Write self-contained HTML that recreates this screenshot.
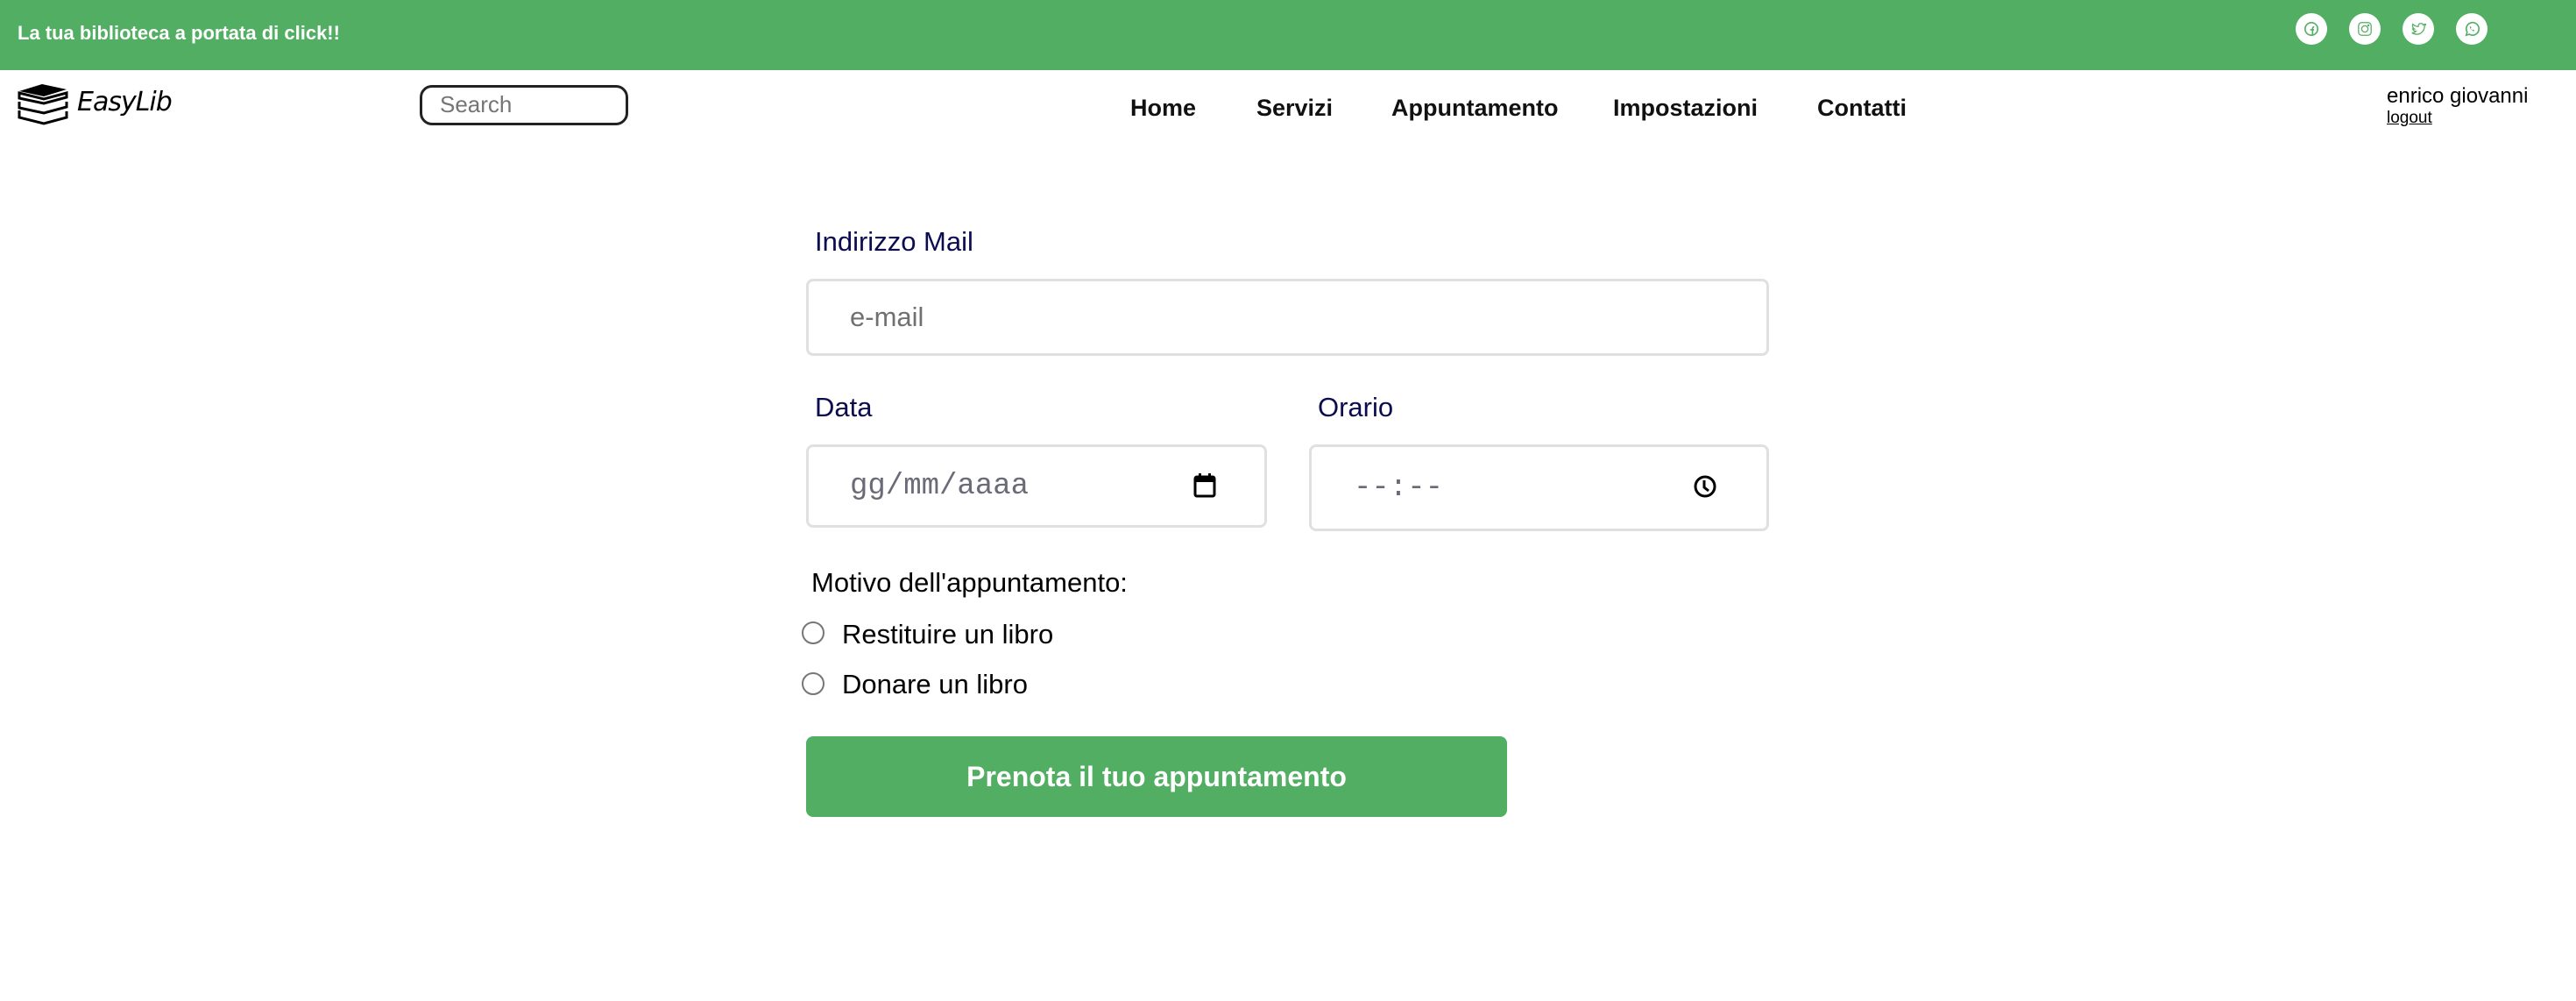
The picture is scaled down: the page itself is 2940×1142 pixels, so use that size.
<!DOCTYPE html>
<html><head><meta charset="utf-8"><style>
*{margin:0;padding:0;box-sizing:border-box}
body{width:2940px;height:1142px;background:#fff;font-family:"Liberation Sans",Arial,sans-serif;position:relative;overflow:hidden}
.abs{position:absolute}
.top{left:0;top:0;width:2940px;height:80px;background:#52ae62}
.tt{left:20px;top:25px;color:#fff;font-weight:bold;font-size:22px}
.soc{width:36px;height:36px;border-radius:50%;background:#fff;top:15px;display:flex;align-items:center;justify-content:center}
.nav{top:108px;font-size:27px;font-weight:bold;color:#111}
.lbl{color:#0b0b50;font-size:31px}
.inp{border:3px solid #e0e0e0;border-radius:8px;background:#fff}
.ph{color:#707070;font-size:31px}
.mono{font-family:"Liberation Mono",monospace;color:#6b6b78;font-size:34px}
.rad{width:26px;height:26px;border:2px solid #767676;border-radius:50%}
.rl{font-size:31px;color:#000}
</style></head><body>
<div class="abs top"></div>
<div class="abs tt">La tua biblioteca a portata di click!!</div>
<div class="abs soc" style="left:2620px"><svg width="18" height="18" viewBox="0 0 20 20" fill="none" stroke="#52ae62" stroke-width="1.8"><circle cx="10" cy="10" r="8"/><path d="M11.5 18V9.5q0-2 2-2M8.5 11h5"/></svg></div>
<div class="abs soc" style="left:2681px"><svg width="18" height="18" viewBox="0 0 20 20" fill="none" stroke="#52ae62" stroke-width="1.4"><rect x="2" y="2" width="16" height="16" rx="4"/><circle cx="10" cy="10" r="4"/><circle cx="14.5" cy="5.5" r=".6"/></svg></div>
<div class="abs soc" style="left:2742px"><svg width="18" height="18" viewBox="0 0 20 20" fill="none" stroke="#52ae62" stroke-width="1.4"><path d="M18 4q-1 1-2 1 0-2-3-2-3 0-3 4Q6 7 3 4q-1 4 2 6l-2 0q1 3 4 3-2 2-5 2 10 5 15-4 1-3 1-5 1-1 2-2z"/></svg></div>
<div class="abs soc" style="left:2803px"><svg width="18" height="18" viewBox="0 0 20 20" fill="none" stroke="#52ae62" stroke-width="1.8"><path d="M3 18l1.2-4A8 8 0 1 1 7 16.8z"/><path d="M7.5 7q0 4 5 6l1-1.2-1.8-1-.8.8q-1.5-.7-2.2-2.2l.8-.8-1-1.8z" fill="#52ae62" stroke="none"/></svg></div>

<svg class="abs" style="left:18px;top:94px" width="62" height="50" viewBox="0 0 62 50" fill="#000"><path d="M4 10L30 2 58 8 32 16z" /><path d="M4 12v6l28 6 26-7v-5L32 19z" fill="none" stroke="#000" stroke-width="3"/><path d="M4 22v7l28 6 26-7v-6" fill="none" stroke="#000" stroke-width="3"/><path d="M4 32v8l28 7 26-7v-7" fill="none" stroke="#000" stroke-width="3"/></svg>
<div class="abs" style="left:88px;top:99px;font-size:30px;font-style:italic;font-family:'DejaVu Sans',sans-serif;letter-spacing:-1px">EasyLib</div>
<div class="abs" style="left:479px;top:97px;width:238px;height:46px;border:3px solid #222;border-radius:14px;padding-left:20px;font-size:26px;line-height:38px;color:#757575">Search</div>

<div class="abs nav" style="left:1290px">Home</div>
<div class="abs nav" style="left:1434px">Servizi</div>
<div class="abs nav" style="left:1588px">Appuntamento</div>
<div class="abs nav" style="left:1841px">Impostazioni</div>
<div class="abs nav" style="left:2074px">Contatti</div>
<div class="abs" style="left:2724px;top:96px;font-size:24px">enrico giovanni</div>
<div class="abs" style="left:2724px;top:124px;font-size:19px;text-decoration:underline">logout</div>

<div class="abs lbl" style="left:930px;top:258px">Indirizzo Mail</div>
<div class="abs inp" style="left:920px;top:318px;width:1099px;height:88px"></div>
<div class="abs ph" style="left:970px;top:344px">e-mail</div>

<div class="abs lbl" style="left:930px;top:447px">Data</div>
<div class="abs lbl" style="left:1504px;top:447px">Orario</div>
<div class="abs inp" style="left:920px;top:507px;width:526px;height:95px"></div>
<div class="abs mono" style="left:970px;top:536px">gg/mm/aaaa</div>
<svg class="abs" style="left:1361px;top:539px" width="28" height="30" viewBox="0 0 28 30"><rect x="3" y="5" width="22" height="22" rx="2" fill="none" stroke="#000" stroke-width="3"/><rect x="3" y="5" width="22" height="6" fill="#000"/><rect x="7" y="1" width="3" height="6" fill="#000"/><rect x="18" y="1" width="3" height="6" fill="#000"/></svg>
<div class="abs inp" style="left:1494px;top:507px;width:525px;height:99px"></div>
<div class="abs mono" style="left:1545px;top:538px">--:--</div>
<svg class="abs" style="left:1932px;top:541px" width="28" height="28" viewBox="0 0 28 28" fill="none" stroke="#000" stroke-width="3"><circle cx="14" cy="14" r="11"/><path d="M13 7v8l5 4"/></svg>

<div class="abs" style="left:926px;top:647px;font-size:31px">Motivo dell'appuntamento:</div>
<div class="abs rad" style="left:915px;top:709px"></div>
<div class="abs rl" style="left:961px;top:706px">Restituire un libro</div>
<div class="abs rad" style="left:915px;top:767px"></div>
<div class="abs rl" style="left:961px;top:763px">Donare un libro</div>

<div class="abs" style="left:920px;top:840px;width:800px;height:92px;background:#52ae62;border-radius:8px;color:#fff;font-weight:bold;font-size:32px;text-align:center;line-height:92px">Prenota il tuo appuntamento</div>
</body></html>
